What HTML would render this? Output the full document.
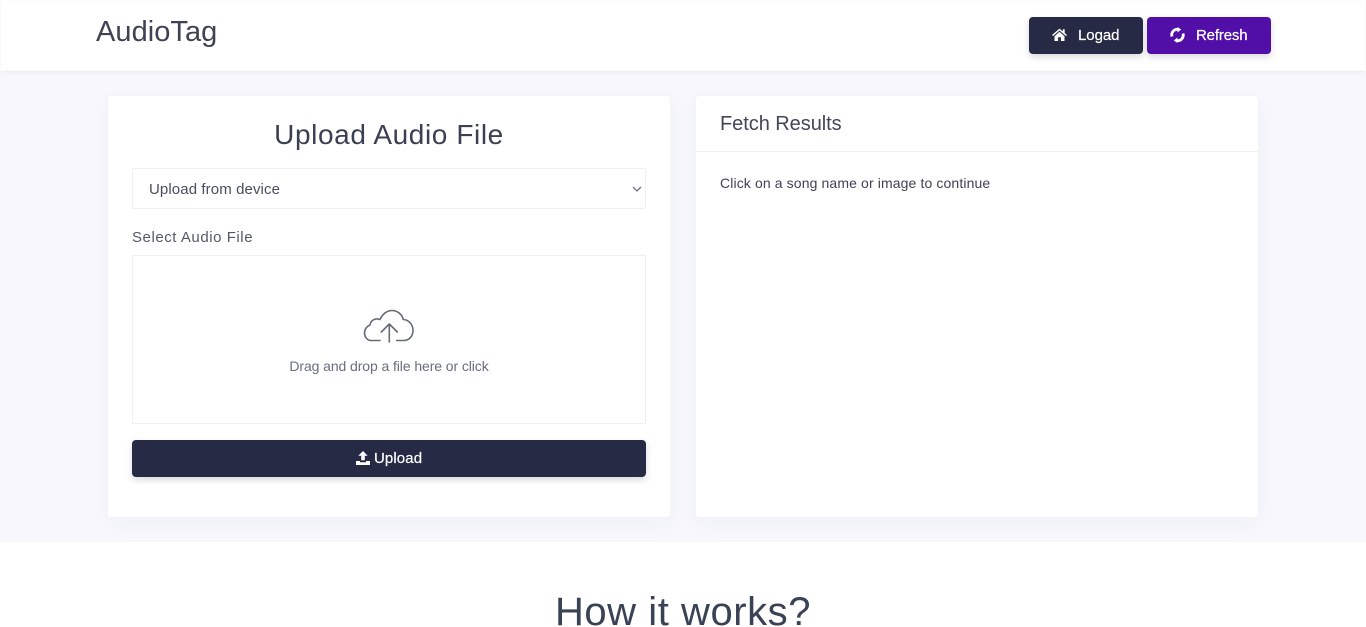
<!DOCTYPE html>
<html lang="en">
<head>
<meta charset="utf-8">
<title>AudioTag</title>
<style>
*{box-sizing:border-box}
html,body{margin:0;padding:0;width:1366px;height:627px;overflow:hidden;background:#fff}
body{font-family:"Liberation Sans",sans-serif;color:#3f4254;position:relative}
.a{position:absolute}
.t{position:absolute;white-space:nowrap;line-height:1}
.bg{left:0;top:71px;width:1366px;height:471px;background:#f7f7fd}
.nav{left:1px;top:1px;width:1364px;height:69px;background:#fff;box-shadow:0 1px 6px rgba(50,50,90,.07)}
.card{background:#fff;border:1px solid #f3f3f8;border-radius:4px;box-shadow:0 6px 20px rgba(60,60,110,.04)}
.btn{border-radius:4px;box-shadow:0 3px 7px rgba(38,42,70,.18)}
.box{background:#fff;border:1px solid #f0f0f4}
</style>
</head>
<body>
<div class="a bg"></div>
<div class="a nav"></div>
<div class="t" style="left:96px;top:18px;font-size:29px;color:#3f4254;letter-spacing:.05px">AudioTag</div>

<div class="a btn" style="left:1029px;top:17px;width:114px;height:37px;background:#262a45"></div>
<svg class="a" style="left:1052px;top:28px" width="15" height="13" viewBox="0 0 15 13"><path fill="#fff" d="M7.500.6 0 7l1 1 6.500-5.500L14 8l1-1-2.300-2V1.200h-1.900v2.200zM2.500 8.200V13h3.600V9.300h2.800V13h3.600V8.200L7.500 3.800z"/></svg>
<div class="t" style="left:1078px;top:28px;font-size:15px;color:#fff;letter-spacing:-.05px;-webkit-text-stroke:.2px #fff">Logad</div>

<div class="a btn" style="left:1147px;top:17px;width:124px;height:37px;background:#510fa8"></div>
<svg class="a" style="left:1170px;top:27px" width="15" height="16" viewBox="0 0 15 16"><g fill="none" stroke="#fff" stroke-width="2.800"><path d="M2 9.500A5.600 5.600 0 0 1 8.500 2.400"/><path d="M13 6.500A5.600 5.600 0 0 1 6.500 13.600"/></g><path fill="#fff" d="M7.500 0v5.500l3.700-3zM7.500 16v-5.500l-3.700 3z"/></svg>
<div class="t" style="left:1196px;top:28px;font-size:15px;color:#fff;letter-spacing:-.15px;-webkit-text-stroke:.2px #fff">Refresh</div>

<div class="a card" style="left:107px;top:95px;width:564px;height:423px"></div>
<div class="t" style="left:107px;width:564px;text-align:center;top:121px;font-size:28px;color:#3a3f52;letter-spacing:.6px">Upload Audio File</div>

<div class="a box" style="left:132px;top:168px;width:514px;height:41px;border-radius:2px"></div>
<div class="t" style="left:149px;top:182px;font-size:15px;color:#4a4d60;letter-spacing:.1px">Upload from device</div>
<svg class="a" style="left:631px;top:185px" width="12" height="8" viewBox="0 0 12 8"><path d="M2 2 6 6l4-4" fill="none" stroke="#70737f" stroke-width="1.300"/></svg>

<div class="t" style="left:132px;top:230px;font-size:15px;color:#55586a;letter-spacing:.55px">Select Audio File</div>

<div class="a box" style="left:132px;top:255px;width:514px;height:169px"></div>
<svg class="a" style="left:363px;top:309px" width="52" height="34" viewBox="0 0 52 34"><g fill="none" stroke="#666b78" stroke-width="1.600" stroke-linecap="round" stroke-linejoin="round"><path d="M17 31.500H8C4 31.500 1.500 27.500 1.500 24c0-3.800 2.500-6.800 5.500-8 .5-4 4.500-7.500 10-5.500C19.500 5 24 1.500 29 1.500c5 0 10 3.500 11.300 9 5.500.3 9.700 5 9.700 11 0 5.500-4 10-9 10H33.700"/><path d="M26.300 33V15M18.300 23l8-8 8 8"/></g></svg>
<div class="t" style="left:132px;width:514px;text-align:center;top:359px;font-size:14px;color:#6a6e7d;letter-spacing:-.09px">Drag and drop a file here or click</div>

<div class="a btn" style="left:132px;top:440px;width:514px;height:37px;background:#262a45"></div>
<svg class="a" style="left:356px;top:451px" width="14" height="14" viewBox="0 0 14 14"><path fill="#fff" d="M7 0 2.300 4.800h2.900v4.400h3.600V4.800h2.900zM0 10h4v1.200h6V10h4v4H0z"/></svg>
<div class="t" style="left:374px;top:451px;font-size:15px;color:#fff;letter-spacing:.1px;-webkit-text-stroke:.2px #fff">Upload</div>

<div class="a card" style="left:695px;top:95px;width:564px;height:423px"></div>
<div class="a" style="left:696px;top:151px;width:562px;height:1px;background:#f0f0f4"></div>
<div class="t" style="left:720px;top:114px;font-size:20px;color:#434658;letter-spacing:-.05px">Fetch Results</div>
<div class="t" style="left:720px;top:176px;font-size:14px;color:#3f4254;letter-spacing:.12px">Click on a song name or image to continue</div>

<div class="t" style="left:0;width:1366px;text-align:center;top:592px;font-size:40px;color:#3a4256;letter-spacing:.55px">How it works?</div>
</body>
</html>
